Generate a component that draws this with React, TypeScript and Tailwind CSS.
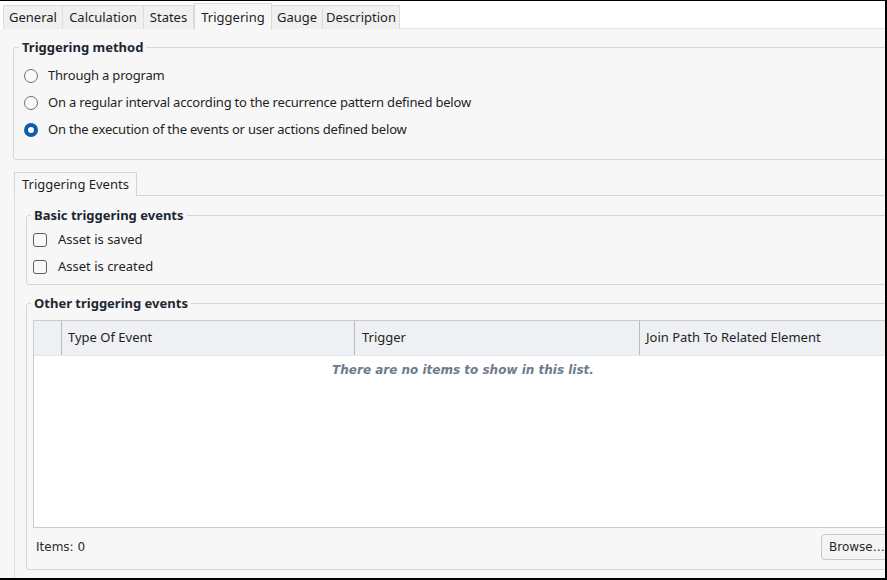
import type { ReactNode } from "react";

const TABS = ["General", "Calculation", "States", "Triggering", "Gauge", "Description"];
const TAB_W: Record<string, number> = {
  General: 60,
  Calculation: 82,
  States: 51,
  Triggering: 78,
  Gauge: 52,
  Description: 78,
};

function Radio({ checked, label }: { checked?: boolean; label: string }) {
  return (
    <div className="flex h-[27px] items-center">
      {checked ? (
        <span className="flex size-[14px] items-center justify-center rounded-full bg-[#0b5cad]">
          <span className="size-[6px] rounded-full bg-white" />
        </span>
      ) : (
        <span className="size-[14px] rounded-full border border-[#6f6f6f] bg-[#f9f9f9]" />
      )}
      <span className="ml-[10px] tracking-[-0.2px] text-[#1f1f1f]">{label}</span>
    </div>
  );
}

function Check({ label }: { label: string }) {
  return (
    <div className="flex h-[27px] items-center">
      <span className="size-[14px] rounded-[3px] border border-[#5f5f5f] bg-[#f9f9f9]" />
      <span className="ml-[11px] text-[#1f1f1f]">{label}</span>
    </div>
  );
}

function Group({
  title,
  className,
  legendClass,
  children,
}: {
  title: string;
  className?: string;
  legendClass?: string;
  children: ReactNode;
}) {
  return (
    <fieldset
      className={`rounded-[3px] border border-[#d3d6da] ${className ?? ""}`}
    >
      <legend
        className={`px-[3px] text-[13px] leading-[18px] font-bold text-[#1c2733] ${legendClass ?? "ml-[5px]"}`}
      >
        {title}
      </legend>
      {children}
    </fieldset>
  );
}

export default function App() {
  return (
    <div
      className="h-[580px] w-[887px] overflow-hidden bg-black pt-[1px] pr-[2px] pb-[2px] text-[13px] text-[#1f1f1f]"
      style={{ fontFamily: '"Noto Sans", "Open Sans", sans-serif' }}
    >
      <div className="flex h-full flex-col overflow-hidden bg-[#f7f7f7]">
        {/* tab strip */}
        <div className="flex h-[28px] shrink-0 items-end bg-white pl-[3px]">
          {TABS.map((t) =>
            t === "Triggering" ? (
              <div
                key={t}
                style={{ width: TAB_W[t] }}
                className="relative -mb-[1px] flex h-[27px] items-start justify-center border border-b-0 border-[#d9d9d9] bg-[#f7f7f7] pt-[4px]"
              >
                {t}
              </div>
            ) : (
              <div
                key={t}
                style={{ width: TAB_W[t] }}
                className="-ml-[1px] flex h-[24px] items-center justify-center border border-b-0 border-[#dcdcdc] bg-[#f0f0f0] pt-[1px] first:ml-0"
              >
                {t}
              </div>
            ),
          )}
          <div className="h-px flex-1 self-end bg-[#e4e4e4]" />
        </div>

        <div className="flex flex-1 flex-col pl-[13px]">
          <Group title="Triggering method" className="mt-[9px] w-[900px]">
            <div className="pt-[6px] pb-[16px] pl-[10px]">
              <Radio label="Through a program" />
              <Radio label="On a regular interval according to the recurrence pattern defined below" />
              <Radio checked label="On the execution of the events or user actions defined below" />
            </div>
          </Group>

          {/* inner tab */}
          <div className="mt-[12px] flex h-[24px] shrink-0 items-end pl-[1px]">
            <div className="flex h-[24px] w-[123px] items-center border border-b-0 border-[#d3d6da] bg-[#f7f7f7] pl-[7px]">
              Triggering Events
            </div>
            <div className="h-px flex-1 bg-[#d3d6da]" />
          </div>

          <div className="ml-[1px] flex flex-1 flex-col border-l border-[#dcdfe3] pb-[8px] pl-[11px]">
            <Group
              title="Basic triggering events"
              legendClass="ml-[4px]"
              className="mt-[10px] w-[900px]"
            >
              <div className="pt-[2px] pb-[4px] pl-[6px]">
                <Check label="Asset is saved" />
                <Check label="Asset is created" />
              </div>
            </Group>

            <Group
              title="Other triggering events"
              legendClass="ml-[4px]"
              className="mt-[9px] flex w-[900px] flex-1 flex-col"
            >
              <div className="flex flex-1 flex-col pt-[8px] pl-[6px]">
                <div className="flex h-[208px] flex-col border border-[#c9ccd1] bg-white">
                  <div className="flex h-[35px] shrink-0 items-stretch border-b border-[#e3e5e8] bg-[#eef0f3]">
                    <div className="w-[28px] border-r border-[#b9bdc3]" />
                    <div className="flex w-[293px] items-center border-r border-[#b9bdc3] pl-[6px]">
                      Type Of Event
                    </div>
                    <div className="flex w-[285px] items-center border-r border-[#b9bdc3] pl-[7px]">
                      Trigger
                    </div>
                    <div className="flex flex-1 items-center pl-[6px]">
                      Join Path To Related Element
                    </div>
                  </div>
                  <div
                    className="w-[858px] pt-[5px] text-center text-[12px] font-bold italic text-[#6d7b8c]"
                    style={{ fontFamily: '"DejaVu Sans", Verdana, sans-serif' }}
                  >
                    There are no items to show in this list.
                  </div>
                </div>
                <div
                  className="flex w-[862px] items-center justify-between pt-[6px] text-[12px] text-[#2a2a2a]"
                  style={{ fontFamily: '"DejaVu Sans", Verdana, sans-serif' }}
                >
                  <span className="pl-[3px]">Items: 0</span>
                  <button className="h-[26px] w-[74px] rounded-[4px] border border-[#c8c8c8] bg-[#f4f4f4] pl-[7px] text-left text-[12px]">
                    Browse…
                  </button>
                </div>
              </div>
            </Group>
          </div>
        </div>
      </div>
    </div>
  );
}
